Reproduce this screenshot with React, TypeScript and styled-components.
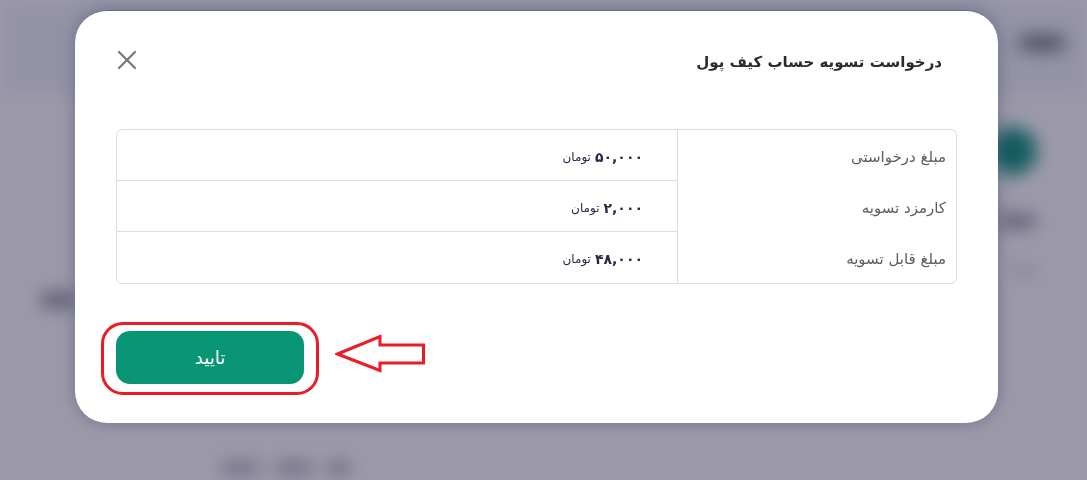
import React from "react";
import styled, { createGlobalStyle } from "styled-components";

const Global = createGlobalStyle`
  html, body { margin: 0; padding: 0; }
  body {
    width: 1087px;
    height: 480px;
    overflow: hidden;
    background: #ffffff;
    font-family: "DejaVu Sans", "Noto Sans", sans-serif;
  }
`;

/* ---------- blurred page behind the dialog ---------- */
const Page = styled.div`
  width: 1087px;
  height: 480px;
  display: flex;
  flex-direction: column;
  filter: blur(9px);
  background: #ffffff;
`;

const TopBar = styled.header`
  height: 95px;
  box-sizing: border-box;
  display: flex;
  flex-direction: row-reverse;
  align-items: flex-start;
  padding: 36px 22px 0;
  background: #f1f3f8;
  border-bottom: 1px solid #e6e8ef;
`;

const Blob = styled.div<{ w: number; h?: number; c?: string }>`
  width: ${(p) => p.w}px;
  height: ${(p) => p.h ?? 12}px;
  border-radius: 6px;
  background: ${(p) => p.c ?? "#5f5d6a"};
`;

const Body = styled.div`
  flex: 1;
  display: flex;
  flex-direction: row-reverse;
`;

const Side = styled.aside`
  width: 110px;
  display: flex;
  flex-direction: column;
  align-items: flex-end;
  padding: 32px 50px 0 0;
  gap: 40px;
`;

const Avatar = styled.div`
  width: 48px;
  height: 48px;
  border-radius: 50%;
  background: #038c76;
`;

const Main = styled.main`
  flex: 1;
  display: flex;
  flex-direction: column;
  padding: 198px 0 0 40px;
  gap: 155px;
`;

const Row = styled.div`
  display: flex;
  gap: 14px;
  padding-left: 180px;
`;

const Overlay = styled.div`
  position: fixed;
  inset: 0;
  background: rgba(40, 35, 70, 0.46);
  display: flex;
  align-items: flex-start;
  padding: 10px 0 0 75px;
`;

/* ---------- dialog ---------- */
const Dialog = styled.section`
  width: 923px;
  box-sizing: border-box;
  background: #ffffff;
  border-radius: 32px;
  padding: 29px 41px 39px;
  box-shadow: 0 0 18px rgba(60, 66, 100, 0.45);
  border-top: 1px solid #6d6d78;
  direction: rtl;
`;

const Header = styled.div`
  height: 44px;
  display: flex;
  align-items: center;
  justify-content: space-between;
  padding-right: 15px;
`;

const Title = styled.h2`
  margin: 0;
  font-size: 15px;
  font-weight: 700;
  color: #2b2b2e;
`;

const Close = styled.button`
  width: 24px;
  height: 24px;
  padding: 0;
  border: 0;
  background: none;
  display: flex;
  align-items: center;
  justify-content: center;
  margin-left: -1px;
  margin-top: -4px;
  cursor: pointer;
`;

const Table = styled.div`
  margin-top: 45px;
  display: grid;
  grid-template-columns: 279px 1fr;
  border: 1px solid #d5dee8;
  border-radius: 6px;
`;

const Labels = styled.div`
  display: flex;
  flex-direction: column;
  border-left: 1px solid #d5dee8;
`;

const Label = styled.div`
  height: 51px;
  display: flex;
  align-items: center;
  padding: 3px 10px 0 0;
  box-sizing: border-box;
  font-size: 15px;
  color: #5c5c63;
`;

const Values = styled.div`
  display: flex;
  flex-direction: column;
`;

const Value = styled.div`
  height: 51px;
  display: flex;
  align-items: center;
  gap: 4px;
  padding: 3px 34px 0 0;
  box-sizing: border-box;
  border-bottom: 1px solid #d5dee8;
  color: #262a48;
  &:last-child { border-bottom: 0; }
`;

const Amount = styled.span`
  font-size: 14px;
  font-weight: 700;
`;

const Unit = styled.span`
  font-size: 12px;
`;

const Footer = styled.div`
  margin-top: 47px;
  display: flex;
  direction: ltr;
  align-items: center;
`;

const Ring = styled.div`
  position: relative;
  &::before {
    content: "";
    position: absolute;
    inset: -9px -15px -11px -15px;
    border: 3px solid #ec1c24;
    border-radius: 22px;
    pointer-events: none;
  }
`;

const Confirm = styled.button`
  width: 188px;
  height: 53px;
  border: 0;
  border-radius: 14px;
  background: #079574;
  color: #ffffff;
  font-family: "DejaVu Sans", sans-serif;
  font-size: 18px;
  font-weight: 400;
  direction: rtl;
  cursor: pointer;
`;

const Arrow = styled.svg`
  margin: -8px 0 0 31px;
  flex: none;
`;

const rows = [
  { label: "مبلغ درخواستی", amount: "۵۰,۰۰۰" },
  { label: "کارمزد تسویه", amount: "۲,۰۰۰" },
  { label: "مبلغ قابل تسویه", amount: "۴۸,۰۰۰" },
];

export default function App() {
  return (
    <>
      <Global />
      <Page>
        <TopBar>
          <Blob w={46} h={14} />
        </TopBar>
        <Body>
          <Side>
            <Avatar />
            <Blob w={40} h={12} c="#7d7b88" />
            <Blob w={24} h={8} c="#c4c3ca" />
          </Side>
          <Main>
            <Blob w={36} h={14} c="#7d7b88" />
            <Row>
              <Blob w={40} h={12} c="#a3a1ab" />
              <Blob w={40} h={12} c="#a3a1ab" />
              <Blob w={22} h={12} c="#8f8d98" />
            </Row>
          </Main>
        </Body>
      </Page>
      <Overlay>
        <Dialog>
          <Header>
            <Title>درخواست تسویه حساب کیف پول</Title>
            <Close aria-label="بستن">
              <svg width="20" height="20" viewBox="0 0 20 20">
                <path d="M2 2 L18 18 M18 2 L2 18" stroke="#767676" strokeWidth="2.2" strokeLinecap="round" />
              </svg>
            </Close>
          </Header>
          <Table>
            <Labels>
              {rows.map((r) => (
                <Label key={r.label}>{r.label}</Label>
              ))}
            </Labels>
            <Values>
              {rows.map((r) => (
                <Value key={r.label}>
                  <Amount>{r.amount}</Amount>
                  <Unit>تومان</Unit>
                </Value>
              ))}
            </Values>
          </Table>
          <Footer>
            <Ring>
              <Confirm>تایید</Confirm>
            </Ring>
            <Arrow width="91" height="39" viewBox="0 0 91 39">
              <path
                d="M2.5 20 L45 2.5 L45 11 L88.5 11 L88.5 29 L45 29 L45 36.5 Z"
                fill="#ffffff"
                stroke="#ec1c24"
                strokeWidth="3"
                strokeLinejoin="miter"
              />
            </Arrow>
          </Footer>
        </Dialog>
      </Overlay>
    </>
  );
}
